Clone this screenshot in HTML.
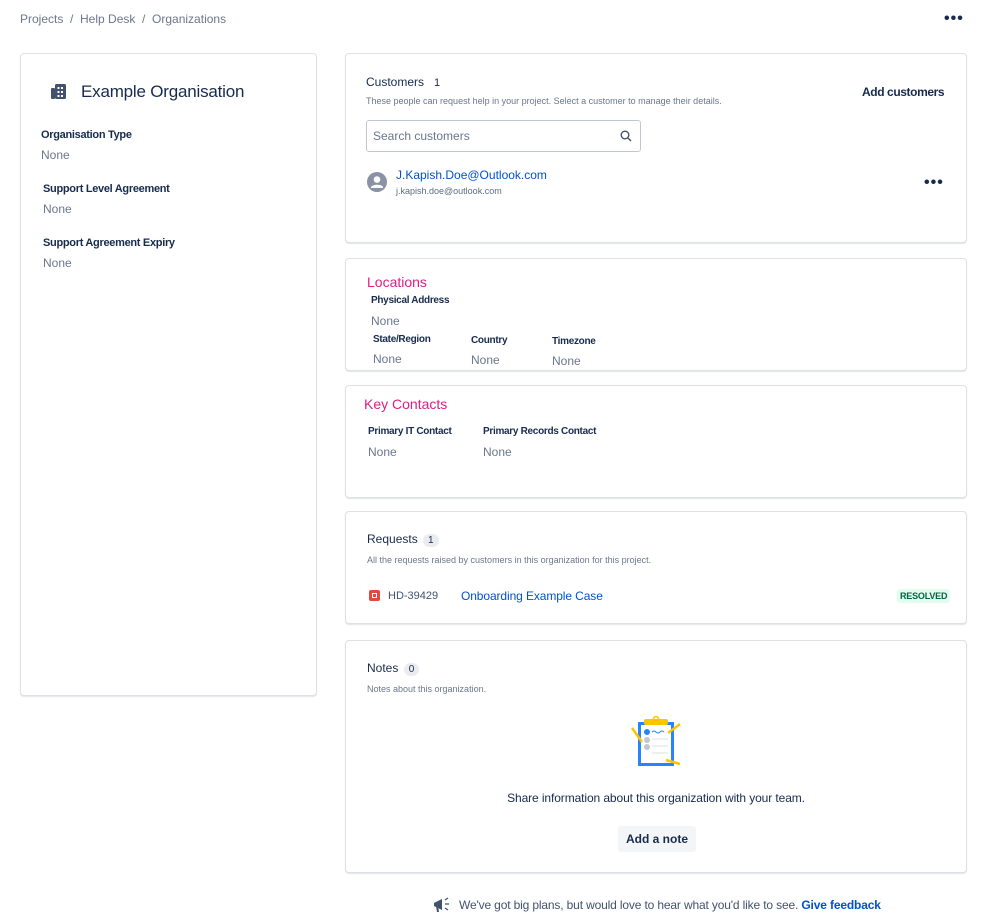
<!DOCTYPE html>
<html><head><meta charset="utf-8"><style>
*{box-sizing:border-box;margin:0;padding:0}
body{width:999px;height:918px;background:#fff;font-family:"Liberation Sans",sans-serif;color:#172b4d;position:relative;overflow:hidden}
.a{position:absolute}
.card{position:absolute;border:1px solid #dfe1e6;border-radius:4px;background:#fff;box-shadow:0 1px 1px rgba(9,30,66,.12)}
.lbl{position:absolute;font-size:11px;font-weight:bold;color:#172b4d;white-space:nowrap;letter-spacing:-0.3px}
.val{position:absolute;font-size:12px;color:#6b778c}
.h{position:absolute;font-size:14px;color:#e01e84}
.small{position:absolute;font-size:9px;color:#6b778c;white-space:nowrap}
.dots{position:absolute;font-size:16px;font-weight:bold;letter-spacing:1px;color:#172b4d}
</style></head><body>
<div class="a" style="left:20px;top:12px;font-size:12px;color:#6b778c">Projects &nbsp;/&nbsp; Help Desk &nbsp;/&nbsp; Organizations</div>
<div class="dots" style="left:944px;top:10px">•••</div>

<div class="card" style="left:20px;top:53px;width:297px;height:643px">
  <svg class="a" style="left:30px;top:30px" width="15" height="16" viewBox="0 0 15 16"><rect x="0" y="4" width="4" height="11" rx="1" fill="#42526e"/><rect x="4" y="0" width="11" height="15" rx="1.5" fill="#42526e"/><g fill="#fff"><rect x="6.5" y="3" width="2" height="2"/><rect x="10" y="3" width="2" height="2"/><rect x="6.5" y="7" width="2" height="2"/><rect x="10" y="7" width="2" height="2"/><rect x="6.5" y="11" width="2" height="2"/><rect x="10" y="11" width="2" height="2"/></g></svg>
  <div class="a" style="left:60px;top:28px;font-size:17px;color:#172b4d;letter-spacing:-0.2px">Example Organisation</div>
  <div class="lbl" style="left:20px;top:75px">Organisation Type</div>
  <div class="val" style="left:20px;top:94px">None</div>
  <div class="lbl" style="left:22px;top:129px">Support Level Agreement</div>
  <div class="val" style="left:22px;top:148px">None</div>
  <div class="lbl" style="left:22px;top:183px">Support Agreement Expiry</div>
  <div class="val" style="left:22px;top:202px">None</div>
</div>

<div class="card" style="left:345px;top:53px;width:622px;height:190px">
  <div class="a" style="left:20px;top:21px;font-size:12px">Customers &nbsp;&nbsp;<span style="font-size:11px">1</span></div>
  <div class="small" style="left:20px;top:42px">These people can request help in your project. Select a customer to manage their details.</div>
  <div class="a" style="left:516px;top:31px;font-size:12px;font-weight:bold;letter-spacing:-0.4px">Add customers</div>
  <div class="a" style="left:20px;top:66px;width:275px;height:32px;border:1px solid #c1c7d0;border-radius:3px"></div>
  <div class="a" style="left:27px;top:75px;font-size:12px;color:#6b778c">Search customers</div>
  <svg class="a" style="left:274px;top:76px" width="12" height="12" viewBox="0 0 12 12"><circle cx="5" cy="5" r="3.8" fill="none" stroke="#42526e" stroke-width="1.4"/><path d="M8 8l3 3" stroke="#42526e" stroke-width="1.4"/></svg>
  <svg class="a" style="left:21px;top:118px" width="20" height="20" viewBox="0 0 20 20"><circle cx="10" cy="10" r="10" fill="#8993a4"/><circle cx="10" cy="7.5" r="3.3" fill="#fff"/><path d="M4 15c1.5-3 10.5-3 12 0v1H4z" fill="#fff"/></svg>
  <div class="a" style="left:50px;top:114px;font-size:12px;color:#0052cc">J.Kapish.Doe@Outlook.com</div>
  <div class="small" style="left:50px;top:132px;color:#5e6c84">j.kapish.doe@outlook.com</div>
  <div class="dots" style="left:578px;top:120px">•••</div>
</div>

<div class="card" style="left:345px;top:258px;width:622px;height:113px">
  <div class="h" style="left:21px;top:15px">Locations</div>
  <div class="lbl" style="left:25px;top:36px;font-size:10px">Physical Address</div>
  <div class="val" style="left:25px;top:55px">None</div>
  <div class="lbl" style="left:27px;top:75px;font-size:10px">State/Region</div>
  <div class="val" style="left:27px;top:93px">None</div>
  <div class="lbl" style="left:125px;top:76px;font-size:10px">Country</div>
  <div class="val" style="left:125px;top:94px">None</div>
  <div class="lbl" style="left:206px;top:77px;font-size:10px">Timezone</div>
  <div class="val" style="left:206px;top:95px">None</div>
</div>

<div class="card" style="left:345px;top:385px;width:622px;height:113px">
  <div class="h" style="left:18px;top:10px">Key Contacts</div>
  <div class="lbl" style="left:22px;top:40px;font-size:10px">Primary IT Contact</div>
  <div class="val" style="left:22px;top:59px">None</div>
  <div class="lbl" style="left:137px;top:40px;font-size:10px">Primary Records Contact</div>
  <div class="val" style="left:137px;top:59px">None</div>
</div>

<div class="card" style="left:345px;top:511px;width:622px;height:113px">
  <div class="a" style="left:21px;top:20px;font-size:12px">Requests <span style="display:inline-block;background:#ebecf0;border-radius:8px;padding:1px 5px;font-size:10px;margin-left:2px">1</span></div>
  <div class="small" style="left:21px;top:43px">All the requests raised by customers in this organization for this project.</div>
  <div class="a" style="left:23px;top:78px;width:11px;height:11px;background:#e5493a;border-radius:2px"><div style="margin:3px;width:5px;height:5px;border:1px solid #fff"></div></div>
  <div class="a" style="left:42px;top:78px;font-size:11px;color:#42526e">HD-39429</div>
  <div class="a" style="left:115px;top:77px;font-size:12px;color:#0052cc;letter-spacing:-0.1px">Onboarding Example Case</div>
  <div class="a" style="left:551px;top:77px;background:#e3fcef;color:#006644;font-size:9px;font-weight:bold;padding:2px 3px;border-radius:3px;letter-spacing:-0.2px">RESOLVED</div>
</div>

<div class="card" style="left:345px;top:640px;width:622px;height:233px">
  <div class="a" style="left:21px;top:20px;font-size:12px">Notes <span style="display:inline-block;background:#ebecf0;border-radius:8px;padding:1px 5px;font-size:10px;margin-left:2px">0</span></div>
  <div class="small" style="left:21px;top:43px">Notes about this organization.</div>
  <svg class="a" style="left:284px;top:75px" width="54" height="54" viewBox="0 0 54 54">
    <rect x="8" y="6" width="36" height="44" fill="#2684ff"/><rect x="11" y="9" width="30" height="38" fill="#fff"/>
    <rect x="14" y="3" width="24" height="6" rx="2" fill="#ffc400"/><circle cx="26" cy="3" r="2.5" fill="none" stroke="#ffc400" stroke-width="1.5"/>
    <circle cx="17" cy="16" r="3" fill="#2684ff"/><path d="M22 16q2-2 4 0t4 0t4 0" stroke="#2684ff" fill="none"/>
    <circle cx="17" cy="24" r="3" fill="#c1c7d0"/><circle cx="17" cy="31" r="3" fill="#c1c7d0"/>
    <path d="M22 23h16M22 30h16M22 37h16" stroke="#dfe1e6"/>
    <path d="M2 12l10 14M50 8l-12 9M36 44l14 4" stroke="#ffc400" stroke-width="2.5"/>
  </svg>
  <div class="a" style="left:0;width:620px;text-align:center;top:150px;font-size:12px;color:#172b4d;letter-spacing:-0.1px">Share information about this organization with your team.</div>
  <div class="a" style="left:272px;top:185px;width:78px;height:26px;background:#f4f5f7;border-radius:3px;font-size:12px;font-weight:bold;text-align:center;line-height:26px">Add a note</div>
</div>

<svg class="a" style="left:433px;top:897px" width="17" height="16" viewBox="0 0 17 16"><path d="M1 6l8-4v11l-8-4z" fill="#42526e"/><path d="M3 9l1 6h2l-1-6z" fill="#42526e"/><path d="M12 3l3-2M12 7h4M12 11l3 2" stroke="#42526e" stroke-width="1.3"/></svg>
<div class="a" style="left:459px;top:898px;font-size:12px;color:#42526e;white-space:nowrap;letter-spacing:-0.15px">We've got big plans, but would love to hear what you'd like to see. <b style="color:#0052cc">Give feedback</b></div>
</body></html>
